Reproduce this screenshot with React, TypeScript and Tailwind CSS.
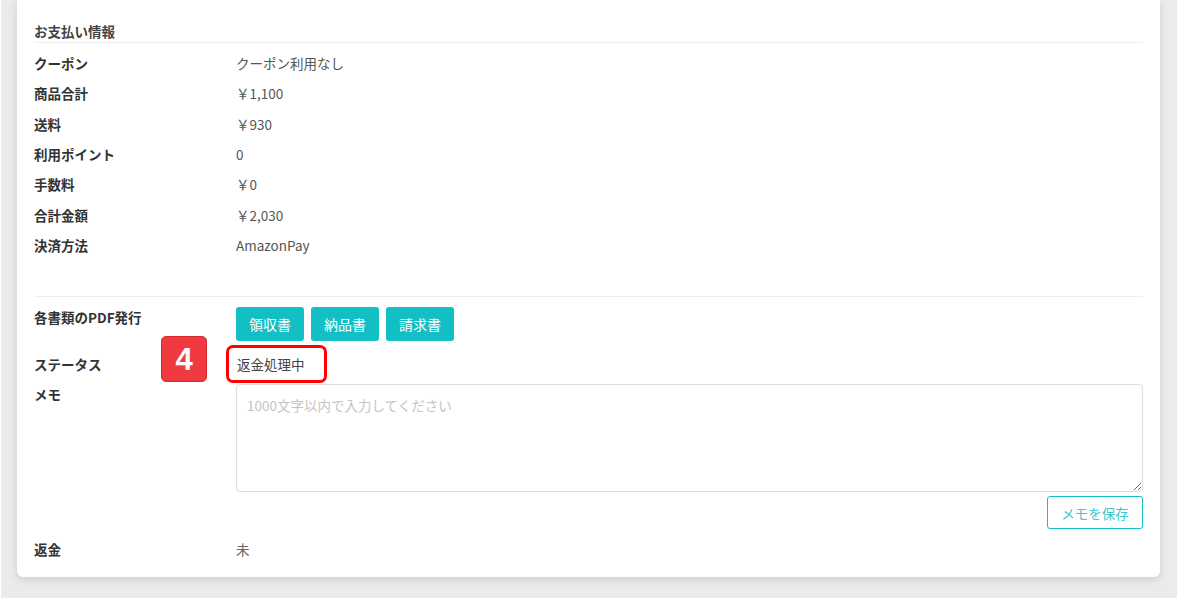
const font = { fontFamily: '"Noto Sans CJK JP", "Noto Sans", sans-serif' };

const rows: [string, string][] = [
  ["クーポン", "クーポン利用なし"],
  ["商品合計", "￥1,100"],
  ["送料", "￥930"],
  ["利用ポイント", "0"],
  ["手数料", "￥0"],
  ["合計金額", "￥2,030"],
  ["決済方法", "AmazonPay"],
];

function Row({ label, value }: { label: string; value: string }) {
  return (
    <div className="flex items-center h-[30.3px]">
      <div className="w-[202px] font-bold text-[#333]">{label}</div>
      <div className="text-[#555]">{value}</div>
    </div>
  );
}

export default function App() {
  return (
    <div className="bg-white w-[1183px] h-[600px] overflow-hidden text-[13.5px] leading-5" style={font}>
      <div className="ml-px mr-[6px] h-[598px] bg-[#ebebeb] pl-4 pr-[17px]">
        <div className="bg-white rounded-b-[6px] shadow-[0_3px_8px_rgba(0,0,0,0.12)] pl-[17px] pr-[17px] pt-[22px] pb-[18px]">
          <div className="font-bold text-[#444] border-b border-[#eeeeee] h-[21px] leading-[19px]">お支払い情報</div>

          <div className="mt-[5px]">
            {rows.map(([l, v]) => (
              <Row key={l} label={l} value={v} />
            ))}
          </div>

          <div className="mt-[36px] border-t border-[#eeeeee] pt-[10px]">
            <div className="flex items-start">
              <div className="w-[202px] font-bold text-[#333]">各書類のPDF発行</div>
              <div className="flex gap-[7px]">
                {["領収書", "納品書", "請求書"].map((b) => (
                  <button
                    key={b}
                    className="h-[34px] px-[13px] rounded-[3px] bg-[#12bfc5] text-white text-[14px]"
                  >
                    {b}
                  </button>
                ))}
              </div>
            </div>

            <div className="flex items-center h-[43px] pt-[2px]">
              <div className="w-[127px] font-bold text-[#333]">ステータス</div>
              <div className="w-[75px] relative h-full">
                <div className="absolute left-0 top-[-7px] w-[46px] h-[46px] rounded-[5px] bg-[#f03a40] border border-[#d62a30] flex items-center justify-center text-white font-bold text-[31px] leading-none" style={{ fontFamily: '"Liberation Sans", Arial, sans-serif' }}>
                  4
                </div>
              </div>
              <div className="relative text-[#444]">
                <span className="relative pl-px">返金処理中</span>
                <div className="absolute left-[-10px] top-[-9px] w-[101px] h-[38px] border-[3px] border-[#ff0000] rounded-[7px] pointer-events-none" />
              </div>
            </div>

            <div className="flex items-start">
              <div className="w-[202px] font-bold text-[#333]">メモ</div>
              <div className="flex-1 flex flex-col items-end">
                <textarea
                  placeholder="1000文字以内で入力してください"
                  className="w-full h-[108px] border border-[#dddddd] rounded-[4px] px-[10px] py-[10px] placeholder:text-[#c4c4c4] outline-none"
                  style={font}
                />
                <button className="mt-[4px] h-[33px] w-[96px] border border-[#12bfc5] rounded-[3px] text-[#3cc8cd] bg-white">
                  メモを保存
                </button>
              </div>
            </div>

            <div className="flex items-center h-[20px] mt-[10px]">
              <div className="w-[202px] font-bold text-[#333]">返金</div>
              <div className="text-[#666]">未</div>
            </div>
          </div>
        </div>
      </div>
    </div>
  );
}
